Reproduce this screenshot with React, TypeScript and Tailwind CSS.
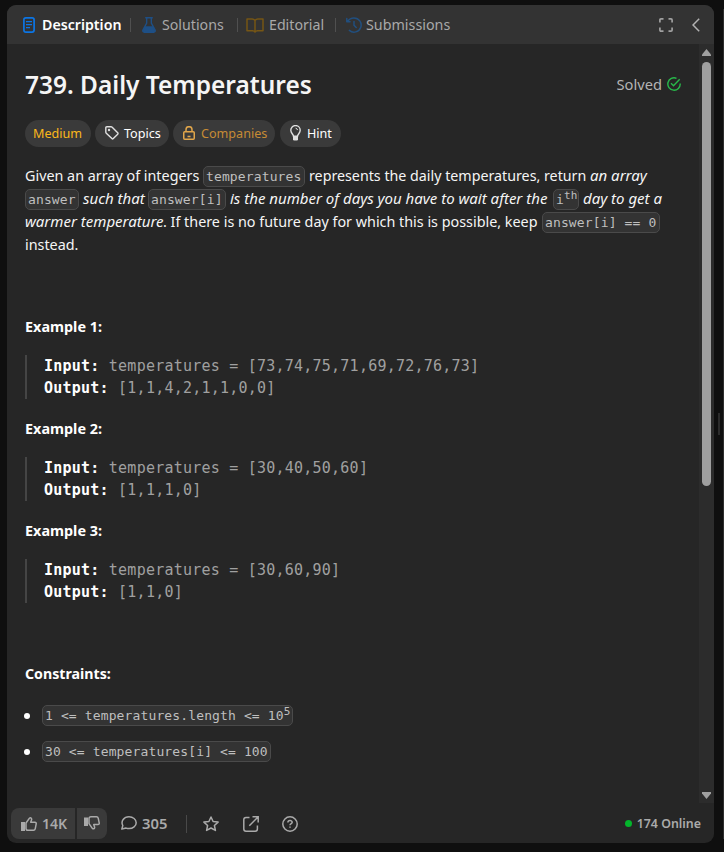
import type { ReactNode } from "react";

const sans = "font-['Noto_Sans','Open_Sans',sans-serif]";
const mono = "font-['DejaVu_Sans_Mono',monospace]";

function Code({ children, className = "" }: { children: ReactNode; className?: string }) {
  return (
    <code
      className={`${mono} inline-flex h-[21px] shrink-0 items-center whitespace-pre rounded-[5px] border border-[#4a4a4a] bg-[#333333] px-[2px] text-[13px] leading-[19px] tracking-[0.13px] not-italic text-[#bfbfbf] ${className}`}
    >
      {children}
    </code>
  );
}

function Separator() {
  return <span className="h-[14px] w-px shrink-0 bg-[#505050]" />;
}

function DescriptionIcon() {
  return (
    <svg className="h-4 w-3 shrink-0" viewBox="0 0 12 16" fill="none" stroke="#0c75e4" strokeWidth="1.7">
      <rect x="0.9" y="0.9" width="10.2" height="14.2" rx="2" />
      <path d="M3 4.6h6M3 7.6h6M3 10.6h4" strokeWidth="1.3" />
    </svg>
  );
}

function FlaskIcon() {
  return (
    <svg className="h-4 w-[14px] shrink-0" viewBox="0 0 14 16" fill="none" stroke="#1e4f85" strokeWidth="1.4">
      <path d="M3.2.8h7.6M4.7 1v5L1 12.8c-.6 1.2 0 2.4 1.3 2.4h9.4c1.3 0 1.9-1.2 1.3-2.4L9.3 6V1" />
      <path d="M3 9.2h8l2 4.2c.3.9-.2 1.6-1.2 1.6H2.2c-1 0-1.5-.7-1.2-1.6z" fill="#1e4f85" stroke="none" />
    </svg>
  );
}

function BookIcon() {
  return (
    <svg className="h-[15px] w-[18px] shrink-0" viewBox="0 0 18 15" fill="none" stroke="#765615" strokeWidth="1.5" strokeLinejoin="round">
      <path d="M9 2.5C8.2 1.4 7.2 1 6 1H1v11.8h5.5c1.2 0 2 .4 2.5 1.2.5-.8 1.3-1.2 2.5-1.2H17V1h-5c-1.2 0-2.2.4-3 1.5zM9 2.5V14" />
    </svg>
  );
}

function HistoryIcon() {
  return (
    <svg className="h-4 w-4 shrink-0" viewBox="0 0 16 16" fill="none" stroke="#214f7f" strokeWidth="1.5" strokeLinecap="round" strokeLinejoin="round">
      <path d="M1.5 4.5C3 2.2 5.3.9 8 .9a7.1 7.1 0 1 1-4.6 12.5M.8 1.5v3.2H4M8 4.5V8.2l2.2 2.3" />
    </svg>
  );
}

function Header() {
  return (
    <div className="flex h-[39px] shrink-0 items-center bg-[#333333] pl-4 pt-px text-[14.2px] text-[#a9a9a9]">
      <DescriptionIcon />
      <span className="ml-[7px] w-[88px] whitespace-nowrap font-semibold text-white">Description</span>
      <Separator />
      <span className="ml-[11px] flex"><FlaskIcon /></span>
      <span className="ml-[6px] w-[75px] whitespace-nowrap">Solutions</span>
      <Separator />
      <span className="ml-2 flex"><BookIcon /></span>
      <span className="ml-[5px] w-[66px] whitespace-nowrap">Editorial</span>
      <Separator />
      <span className="ml-[10px] flex"><HistoryIcon /></span>
      <span className="ml-1 whitespace-nowrap text-[14.3px]">Submissions</span>
      <svg className="ml-auto h-[14px] w-[14px]" viewBox="0 0 14 14" fill="none" stroke="#a0a0a0" strokeWidth="1.7">
        <path d="M.9 4.5V2Q.9.9 2 .9h2.5M9.5.9H12Q13.1.9 13.1 2v2.5M13.1 9.5V12Q13.1 13.1 12 13.1H9.5M4.5 13.1H2Q.9 13.1.9 12V9.5" />
      </svg>
      <svg className="ml-[19px] mr-[14px] h-[14px] w-2" viewBox="0 0 8 14" fill="none" stroke="#b2b2b2" strokeWidth="1.5">
        <path d="M7.2.8L1 7l6.2 6.2" />
      </svg>
    </div>
  );
}

function Pill({ children, className }: { children: ReactNode; className: string }) {
  return (
    <span className={`flex h-[27px] items-center whitespace-nowrap rounded-full bg-[#3a3a3a] text-[12.6px] ${className}`}>{children}</span>
  );
}

function Tags() {
  return (
    <div className="mt-[19px] flex gap-1 text-white">
      <Pill className="w-[66px] pl-[8px] text-[#fbb81b]"><span className="pt-px">Medium</span></Pill>
      <Pill className="w-[74px] pl-[10px]">
        <svg className="mr-[5px] mb-[2px] h-[14px] w-[14px]" viewBox="0 0 14 14" fill="none" stroke="#e0e0e0" strokeWidth="1.4" strokeLinejoin="round">
          <path d="M.8 1.8Q.8.8 1.8.8H6q.7 0 1.2.5l5.5 5.5q.7.7 0 1.4l-4.4 4.4q-.7.7-1.4 0L1.3 7.2Q.8 6.7.8 6z" />
          <circle cx="4" cy="4" r=".5" />
        </svg>
        <span className="pt-px">Topics</span>
      </Pill>
      <Pill className="w-[102px] pl-[10px] text-[#c68b35]">
        <svg className="mr-[6px] mb-px h-[14px] w-[12px]" viewBox="0 0 12 14" fill="none" stroke="#e1a64b" strokeWidth="1.5">
          <rect x=".75" y="5.7" width="10.5" height="7.5" rx="1" />
          <path d="M3 5.5V3.7a3 3 0 0 1 6 0v1.8M4.5 10.5h3" />
        </svg>
        <span className="pt-px">Companies</span>
      </Pill>
      <Pill className="ml-px w-[61px] pl-[10px]">
        <svg className="mr-[6px] mb-[2px] h-4 w-[11px]" viewBox="0 0 11 16" fill="none" stroke="#e0e0e0" strokeWidth="1.4">
          <path d="M3.5 11.3C3.5 9.5.8 8.2.8 5.300a4.700 4.700 0 0 1 9.400 0c0 2.900-2.700 4.200-2.700 6z" />
          <path d="M5.600 3.200q1.700.3 2 1.900" strokeWidth="1" />
          <path d="M3 12v2.200q0 1.300 1.300 1.300h2.400q1.300 0 1.300-1.300V12z" fill="#e0e0e0" stroke="none" />
        </svg>
        <span className="pt-px">Hint</span>
      </Pill>
    </div>
  );
}

function Statement() {
  return (
    <div className="mt-[17px] text-[14.35px] text-[#f5f5f5] [&_code]:mt-[2px] [&_em]:text-[15px] [&>p]:flex [&>p]:h-[23px] [&>p]:items-center [&>p]:whitespace-pre">
      <p>
        <span className="w-[178px]">Given an array of integers</span>
        <Code className="w-[102px]">temperatures</Code>
        <span className="ml-1 w-[281px] text-[14.25px]">represents the daily temperatures, return</span>
        <em>an array</em>
      </p>
      <p>
        <Code className="w-[54px]">answer</Code>
        <em className="ml-1 w-[65px]">such that</em>
        <Code className="w-[78px]">answer[i]</Code>
        <em className="ml-1 w-[323px]">is the number of days you have to wait after the</em>
        <Code className="w-[26px]">i<sup className="-top-1 text-[11px]">th</sup></Code>
        <em className="ml-1">day to get a</em>
      </p>
      <p>
        <em className="w-[138px]">warmer temperature</em>
        <span className="w-[379px]">. If there is no future day for which this is possible, keep</span>
        <Code className="w-[118px]">answer[i] == 0</Code>
      </p>
      <p>instead.</p>
    </div>
  );
}

function Example({ n, input, output }: { n: number; input: string; output: string }) {
  return (
    <section className="h-[102px]">
      <h2 className="h-[22px] text-[14.4px] font-bold leading-[22px] text-white">Example {n}:</h2>
      <pre className={`${mono} mt-[17px] h-[44px] border-l-2 border-[#454545] pl-[17px] text-[15px] leading-[22px] tracking-[0.23px] text-[#a0a0a0]`}>
        <b className="text-white">Input:</b> {input}{"\n"}
        <b className="text-white">Output:</b> {output}
      </pre>
    </section>
  );
}

function Footer() {
  return (
    <div className="flex h-[40px] shrink-0 items-start pl-1 text-[14px] font-medium text-[#aaaaaa]">
      <div className="flex h-[31px] w-16 items-center rounded-l-lg bg-[#3a3a3a] pl-[10px]">
        <svg className="mr-[5px] h-[14px] w-4" viewBox="0 0 16 14" fill="none" stroke="#aaa" strokeWidth="1.5" strokeLinejoin="round">
          <path d="M0 5h4v9H0z" fill="#aaa" stroke="none" />
          <path d="M5 6l3.5-4.9c1.5-.8 2.5.6 2 1.9L9.7 5.2h4.2c1 0 1.5.8 1.3 1.7l-1 4.9c-.2.9-.8 1.4-1.7 1.4H7c-1 0-2-.8-2-1.8z" />
        </svg>
        <span className="font-semibold">14K</span>
      </div>
      <div className="ml-[2px] flex h-[31px] w-[30px] items-center rounded-r-lg bg-[#3a3a3a] pl-[7px]">
        <svg className="mb-px h-[14px] w-4" viewBox="0 0 16 14" fill="none" stroke="#aaa" strokeWidth="1.5" strokeLinejoin="round">
          <path d="M0 1.5h4v8.5H0z" fill="#aaa" stroke="none" />
          <path d="M5 7.6l3.5 5c1.5.8 2.5-.6 2-1.9l-.8-2.1h4.2c1 0 1.5-.8 1.3-1.7l-1-4.7C14 1.3 13.4.8 12.5.8H7c-1 0-2 .8-2 1.8z" />
        </svg>
      </div>
      <div className="flex h-[31px] flex-1 items-center pl-[14px] pr-[13px]">
        <svg className="mb-px h-[14px] w-4" viewBox="0 0 16 14" fill="none" stroke="#aaa" strokeWidth="1.5" strokeLinejoin="round">
          <path d="M.8 13.1l1-3.6C-.5 5.2 3 .8 8 .8c4 0 7.2 2.5 7.2 5.9S12 12.6 8 12.6c-1 0-2-.2-2.9-.5z" />
        </svg>
        <span className="ml-[5px] w-[44px] text-[14.8px] font-semibold">305</span>
        <span className="h-[18px] w-px bg-[#494949]" />
        <svg className="ml-4 h-4 w-4" viewBox="0 0 16 16" fill="none" stroke="#aaa" strokeWidth="1.5" strokeLinejoin="round">
          <path d="M8 1l2.1 4.5 5 .6-3.7 3.4 1 4.9L8 12l-4.4 2.4 1-4.9L.9 6.1l5-.6z" />
        </svg>
        <svg className="ml-6 h-4 w-4" viewBox="0 0 16 16" fill="none" stroke="#aaa" strokeWidth="1.5">
          <path d="M6.5 1.6H3Q.8 1.6.8 3.8V13q0 2.2 2.2 2.2h9.2q2.2 0 2.2-2.2V9.5M9.5.8h5.7v5.7M15 1L6.3 9.7" />
        </svg>
        <svg className="ml-[23px] h-4 w-4" viewBox="0 0 16 16" fill="none" stroke="#aaa" strokeWidth="1.5">
          <circle cx="8" cy="8" r="7.2" />
          <path d="M5.9 6.5C5.9 3.8 10.2 4 10.2 6.3 10.2 7.6 8 7.5 8 9.3M8 10.5v1.3" />
        </svg>
        <span className="ml-auto h-[7px] w-[7px] rounded-full bg-[#03b52b]" />
        <span className="ml-[5px] whitespace-nowrap pt-px text-[12.4px] font-semibold">174 Online</span>
      </div>
    </div>
  );
}

export default function App() {
  return (
    <main className={`${sans} flex h-[852px] w-[724px] overflow-hidden bg-[#0f0f0f] pl-[7px] pt-[5px]`}>
      <div className="flex h-[838px] w-[707px] shrink-0 flex-col overflow-hidden rounded-[9px] bg-[#262626]">
        <Header />
        <div className="flex h-[759px] shrink-0">
          <div className="w-[692px] pl-[18px]">
            <div className="flex h-[57px] items-end justify-between pr-[18px]">
              <h1 className="whitespace-nowrap text-[24.45px] font-semibold leading-[32px] text-[#f5f5f5]">739. Daily Temperatures</h1>
              <div className="flex h-[32px] items-center gap-[5px] pb-[2px] text-[14.7px] text-[#b4b4b4]">
                Solved
                <svg className="mb-px h-[14px] w-[14px]" viewBox="0 0 14 14" fill="none" stroke="#28b84a" strokeWidth="1.4">
                  <path d="M9.5 1.3A6.2 6.2 0 1 0 13.2 6.5M4 6.3l2.5 2.5L12.7 2.3" />
                </svg>
              </div>
            </div>
            <Tags />
            <Statement />
            <div className="mt-[60px]">
              <Example n={1} input="temperatures = [73,74,75,71,69,72,76,73]" output="[1,1,4,2,1,1,0,0]" />
              <Example n={2} input="temperatures = [30,40,50,60]" output="[1,1,1,0]" />
              <Example n={3} input="temperatures = [30,60,90]" output="[1,1,0]" />
            </div>
            <h2 className="mt-[41px] h-[22px] text-[14.2px] font-bold leading-[22px] text-white">Constraints:</h2>
            <ul className="-ml-px mt-[20px] flex flex-col gap-[15px]">
              <li className="flex h-[21px] items-center">
                <span className="mr-3 h-[6px] w-[6px] rounded-full bg-white" />
                <Code className="w-[251px]">{"1 <= temperatures.length <= 10"}<sup className="-top-1 text-[11px]">5</sup></Code>
              </li>
              <li className="flex h-[21px] items-center">
                <span className="mr-3 h-[6px] w-[6px] rounded-full bg-white" />
                <Code className="w-[229px]">{"30 <= temperatures[i] <= 100"}</Code>
              </li>
            </ul>
          </div>
          <div className="flex w-[15px] flex-col items-center bg-[#2c2c2c] pr-px pt-[5px] pb-1">
            <svg className="h-[7px] w-[9px]" viewBox="0 0 9 7" fill="#9f9f9f"><path d="M4.5 0L9 5.5V7H0V5.5z" /></svg>
            <div className="mt-[6px] h-[424px] w-[9px] rounded-full bg-[#9f9f9f]" />
            <svg className="mt-auto h-[7px] w-[9px]" viewBox="0 0 9 7" fill="#9f9f9f"><path d="M0 0h9v1.5L4.5 7 0 1.5z" /></svg>
          </div>
        </div>
        <div className="mt-[5px]"><Footer /></div>
      </div>
      <div className="flex h-[838px] flex-1 items-center justify-end">
        <span className="mr-[3px] h-[22px] w-[2px] bg-[#2c2c2c]" />
        <span className="h-[830px] w-px bg-[#2e2e2e]" />
      </div>
    </main>
  );
}
